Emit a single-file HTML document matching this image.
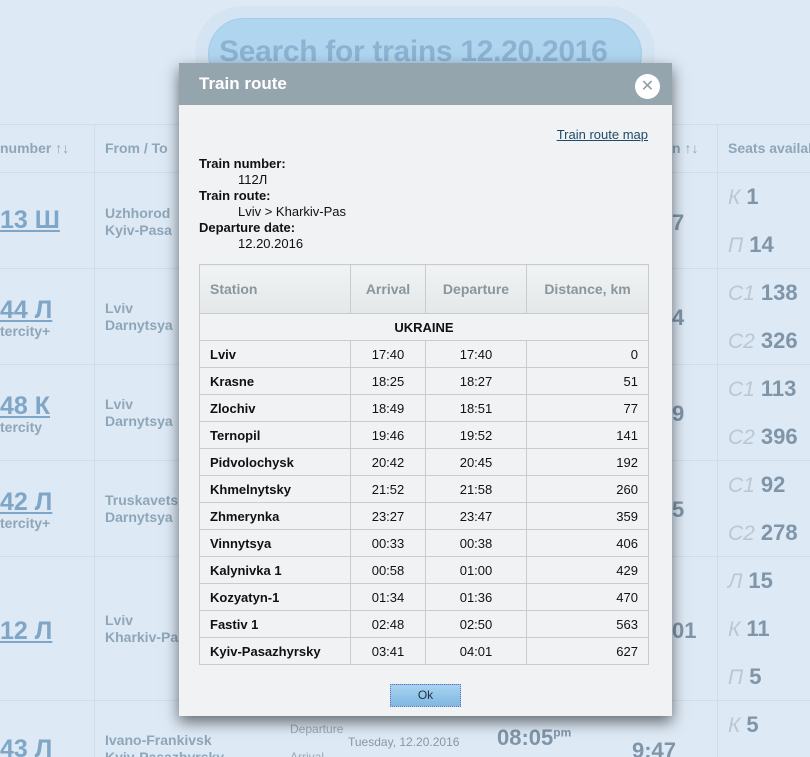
<!DOCTYPE html>
<html><head><meta charset="utf-8"><style>
*{margin:0;padding:0;box-sizing:border-box}
html,body{width:810px;height:757px;overflow:hidden}
body{background:#dde9f5;font-family:"Liberation Sans","DejaVu Sans",sans-serif;position:relative}
.a{position:absolute;white-space:nowrap}
.bg{color:#8fa6b8;font-weight:bold}
.num{color:#7fa6c6;font-size:25px;font-weight:bold;text-decoration:underline}
.sub{color:#8fa6b8;font-size:14px;font-weight:bold}
.vl{position:absolute;top:124px;bottom:0;width:1px;background:#cfdceb}
.hl{position:absolute;left:0;right:0;height:1px;background:#cfdceb}
.seat{position:absolute;left:728px;font-size:22px;font-weight:bold;color:#8095a8;white-space:nowrap}
.seat i{color:#b8c8d6;font-weight:normal;margin-right:6px;font-size:21px}
.modal{position:absolute;left:179px;top:63px;width:493px;height:653px;background:#f0f2f4;box-shadow:0 6px 14px rgba(0,0,0,.55)}
.mh{height:42px;background:#95a5ad;color:#fff;font-weight:bold;font-size:17px;padding:11px 0 0 20px}
.x{position:absolute;right:12px;top:11px;width:25px;height:25px;border-radius:50%;background:#fff;color:#8c9ca4;font-size:16px;text-align:center;line-height:25px;font-weight:bold}
table{position:absolute;left:20px;top:201px;width:450px;border-collapse:collapse;font-size:13px}
td,th{border:1px solid #c8cccf;height:27px;padding:0 10px}
th{height:49px;background:linear-gradient(#f0f3f3,#e4e8e8);color:#8a959c;font-size:14px;text-align:center}
td{color:#111}
td.s{font-weight:bold}
td.c{text-align:center}
td.r{text-align:right}
</style></head><body>
<div class="a" style="left:195px;top:6px;width:460px;height:94px;border-radius:47px;background:#d5e4f2"></div>
<div class="a" style="left:208px;top:18px;width:434px;height:72px;border-radius:36px;background:#b0d5ef;border:1px solid #a4cbe9"></div>
<div class="a" style="left:219px;top:35px;font-size:30px;font-weight:bold;color:#8cb3d2;letter-spacing:-0.3px">Search for trains 12.20.2016</div>

<div class="hl" style="top:124px"></div>
<div class="hl" style="top:172px"></div>
<div class="hl" style="top:268px"></div>
<div class="hl" style="top:364px"></div>
<div class="hl" style="top:460px"></div>
<div class="hl" style="top:556px"></div>
<div class="hl" style="top:700px"></div>
<div class="vl" style="left:94px"></div>
<div class="vl" style="left:717px"></div>
<div class="a bg" style="left:0;top:140px;font-size:14px">number ↑↓</div>
<div class="a bg" style="left:105px;top:140px;font-size:14px">From / To</div>
<div class="a bg" style="left:672px;top:140px;font-size:14px">n ↑↓</div>
<div class="a bg" style="left:728px;top:140px;font-size:14px">Seats available</div>

<div class="a num" style="left:0;top:206px">13 Ш</div>
<div class="a sub" style="left:105px;top:205px;line-height:17px">Uzhhorod<br>Kyiv-Pasa</div>
<div class="a num" style="left:0;top:296px">44 Л</div><div class="a sub" style="left:0;top:323px">tercity+</div>
<div class="a sub" style="left:105px;top:300px;line-height:17px">Lviv<br>Darnytsya</div>
<div class="a num" style="left:0;top:392px">48 К</div><div class="a sub" style="left:0;top:419px">tercity</div>
<div class="a sub" style="left:105px;top:396px;line-height:17px">Lviv<br>Darnytsya</div>
<div class="a num" style="left:0;top:488px">42 Л</div><div class="a sub" style="left:0;top:515px">tercity+</div>
<div class="a sub" style="left:105px;top:492px;line-height:17px">Truskavets<br>Darnytsya</div>
<div class="a num" style="left:0;top:617px">12 Л</div>
<div class="a sub" style="left:105px;top:612px;line-height:17px">Lviv<br>Kharkiv-Pas</div>
<div class="a num" style="left:0;top:735px">43 Л</div>
<div class="a sub" style="left:105px;top:732px;line-height:17px">Ivano-Frankivsk<br>Kyiv-Pasazhyrsky</div>
<div class="a" style="left:290px;top:722px;font-size:12px;color:#9aa8b4">Departure</div>
<div class="a" style="left:348px;top:735px;font-size:12px;color:#8a98a4">Tuesday, 12.20.2016</div>
<div class="a" style="left:290px;top:750px;font-size:12px;color:#9aa8b4">Arrival</div>
<div class="a bg" style="left:497px;top:725px;font-size:22px;color:#8095a8">08:05<sup style="font-size:12px">pm</sup></div>
<div class="a bg" style="left:632px;top:738px;font-size:22px;color:#8095a8">9:47</div>
<div class="a bg" style="left:672px;top:210px;font-size:22px;color:#8095a8">7</div>
<div class="a bg" style="left:672px;top:305px;font-size:22px;color:#8095a8">4</div>
<div class="a bg" style="left:672px;top:401px;font-size:22px;color:#8095a8">9</div>
<div class="a bg" style="left:672px;top:497px;font-size:22px;color:#8095a8">5</div>
<div class="a bg" style="left:672px;top:618px;font-size:22px;color:#8095a8">01</div>

<div class="seat" style="top:184px"><i>К</i>1</div>
<div class="seat" style="top:232px"><i>П</i>14</div>
<div class="seat" style="top:280px"><i>С1</i>138</div>
<div class="seat" style="top:328px"><i>С2</i>326</div>
<div class="seat" style="top:376px"><i>С1</i>113</div>
<div class="seat" style="top:424px"><i>С2</i>396</div>
<div class="seat" style="top:472px"><i>С1</i>92</div>
<div class="seat" style="top:520px"><i>С2</i>278</div>
<div class="seat" style="top:568px"><i>Л</i>15</div>
<div class="seat" style="top:616px"><i>К</i>11</div>
<div class="seat" style="top:664px"><i>П</i>5</div>
<div class="seat" style="top:712px"><i>К</i>5</div>

<div class="modal">
<div class="mh">Train route</div>
<div class="x">✕</div>
<div class="a" style="right:24px;top:64px;font-size:13px;color:#1e4a6a;text-decoration:underline">Train route map</div>
<div class="a" style="left:20px;top:93px;font-size:13px;line-height:16px;color:#111">
<b>Train number:</b><br><span style="margin-left:39px">112Л</span><br><b>Train route:</b><br><span style="margin-left:39px">Lviv &gt; Kharkiv-Pas</span><br><b>Departure date:</b><br><span style="margin-left:39px">12.20.2016</span></div>
<table>
<tr><th style="text-align:left;width:151px">Station</th><th style="width:75px;padding:0">Arrival</th><th style="width:101px;padding:0">Departure</th><th style="padding:0">Distance, km</th></tr>
<tr><td colspan="4" class="c s">UKRAINE</td></tr>
<tr><td class="s">Lviv</td><td class="c">17:40</td><td class="c">17:40</td><td class="r">0</td></tr>
<tr><td class="s">Krasne</td><td class="c">18:25</td><td class="c">18:27</td><td class="r">51</td></tr>
<tr><td class="s">Zlochiv</td><td class="c">18:49</td><td class="c">18:51</td><td class="r">77</td></tr>
<tr><td class="s">Ternopil</td><td class="c">19:46</td><td class="c">19:52</td><td class="r">141</td></tr>
<tr><td class="s">Pidvolochysk</td><td class="c">20:42</td><td class="c">20:45</td><td class="r">192</td></tr>
<tr><td class="s">Khmelnytsky</td><td class="c">21:52</td><td class="c">21:58</td><td class="r">260</td></tr>
<tr><td class="s">Zhmerynka</td><td class="c">23:27</td><td class="c">23:47</td><td class="r">359</td></tr>
<tr><td class="s">Vinnytsya</td><td class="c">00:33</td><td class="c">00:38</td><td class="r">406</td></tr>
<tr><td class="s">Kalynivka 1</td><td class="c">00:58</td><td class="c">01:00</td><td class="r">429</td></tr>
<tr><td class="s">Kozyatyn-1</td><td class="c">01:34</td><td class="c">01:36</td><td class="r">470</td></tr>
<tr><td class="s">Fastiv 1</td><td class="c">02:48</td><td class="c">02:50</td><td class="r">563</td></tr>
<tr><td class="s">Kyiv-Pasazhyrsky</td><td class="c">03:41</td><td class="c">04:01</td><td class="r">627</td></tr>
</table>
<div class="a" style="left:211px;top:621px;width:71px;height:23px;border:1px dotted #6670c0;background:linear-gradient(#a9d3f0,#7fb7e2);font-size:12px;color:#234;text-align:center;line-height:21px">Ok</div>
</div>
</body></html>
